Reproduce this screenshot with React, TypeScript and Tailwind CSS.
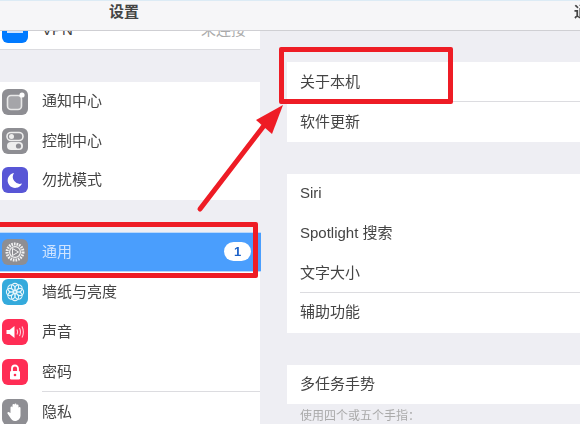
import React from "react";

const font = { fontFamily: '"Liberation Sans", "Noto Sans CJK SC", sans-serif' };

function Tile({ color, children }: { color: string; children: React.ReactNode }) {
  return (
    <div className="ml-[2px] flex h-[26px] w-[26px] shrink-0 items-center justify-center rounded-[6px]" style={{ background: color }}>
      <svg width="22" height="22" viewBox="0 0 22 22">{children}</svg>
    </div>
  );
}

function SideRow({ icon, label, border, h = "h-10" }: { icon: React.ReactNode; label: string; border?: boolean; h?: string }) {
  return (
    <div className={`relative flex items-center ${h}`}>
      {icon}
      <span className="ml-[14px] text-[15px] text-[#444]">{label}</span>
      {border && <div className="absolute bottom-0 left-[42px] right-0 h-px bg-[#dcdce0]" />}
    </div>
  );
}

function RightRow({ label, border, h = "h-10" }: { label: string; border?: boolean; h?: string }) {
  return (
    <div className={`relative flex items-center pl-[13px] text-[15px] text-[#444] ${h}`}>
      {label}
      {border && <div className="absolute bottom-0 left-[13px] right-0 h-px bg-[#dcdce0]" />}
    </div>
  );
}

const notify = (
  <Tile color="#8e8e93">
    <rect x="3.5" y="4.5" width="14" height="14" rx="3.5" fill="#a5a5a9" stroke="#e8e8e8" strokeWidth="1.6" />
    <circle cx="18" cy="4" r="2.6" fill="#fff" />
  </Tile>
);
const control = (
  <Tile color="#8e8e93">
    <rect x="3" y="2.5" width="16" height="8" rx="4" fill="none" stroke="#eee" strokeWidth="1.6" />
    <circle cx="7.5" cy="6.5" r="2.5" fill="#eee" />
    <rect x="3" y="12" width="16" height="8" rx="4" fill="#eee" />
    <circle cx="14.5" cy="16" r="2.6" fill="#8e8e93" />
  </Tile>
);
const moon = (
  <Tile color="#5856d6">
    <path d="M10 4a7.5 7.5 0 1 0 8 10.5A7 7 0 0 1 10 4z" fill="#fff" />
  </Tile>
);
const gear = (
  <Tile color="#8e8e93">
    <circle cx="11" cy="11" r="8" fill="none" stroke="#f2f2f2" strokeWidth="3" strokeDasharray="1.6 1" />
    <circle cx="11" cy="11" r="5.4" fill="none" stroke="#f2f2f2" strokeWidth="1.2" />
    <path d="M8.5 7.5 L14.5 11 L8.5 14.5 Z" fill="none" stroke="#f2f2f2" strokeWidth="1" />
  </Tile>
);
const flower = (
  <Tile color="#34aadc">
    {[0, 45, 90, 135, 180, 225, 270, 315].map((a) => (
      <circle key={a} cx="11" cy="6" r="3.6" fill="none" stroke="#e6f5fb" strokeWidth="1.1" transform={`rotate(${a} 11 11)`} />
    ))}
  </Tile>
);
const sound = (
  <Tile color="#ff2d55">
    <path d="M2.5 9h3l5-4v12l-5-4h-3z" fill="#fff" />
    <path d="M13 8.5q1.4 2.5 0 5M15.5 7q2 4 0 8M18 5.5q2.8 5.5 0 11" fill="none" stroke="#ffd0da" strokeWidth="1.1" />
  </Tile>
);
const lock = (
  <Tile color="#ff2d55">
    <path d="M8 10V7.5a3 3 0 0 1 6 0V10" fill="none" stroke="#fff" strokeWidth="1.8" />
    <rect x="6" y="10" width="10" height="8.5" rx="1.2" fill="#fff" />
    <circle cx="11" cy="14" r="1.3" fill="#ff2d55" />
  </Tile>
);
const hand = (
  <Tile color="#8e8e93">
    <path d="M6.5 12V6.5a1 1 0 0 1 2 0V4a1 1 0 0 1 2 0V3.5a1 1 0 0 1 2 0V4.5a1 1 0 0 1 2 0V7a1 1 0 0 1 2 0v7.5c0 3-2.5 5.5-5.5 5.5-2.5 0-3.5-1.5-4.5-3L3.5 12.5c-.6-1 .8-2 1.6-1.2z" fill="#fff" />
  </Tile>
);

export default function App() {
  return (
    <div className="relative h-[424px] w-[580px] overflow-hidden bg-[#eeeef3]" style={font}>
      <div className="h-full w-full blur-[0.5px]">
        <header className="relative z-10 flex h-[31px] items-center border-t border-b border-t-[#dcebf5] border-b-[#cfcfd3] bg-[#f6f6f8] pb-[6px]">
          <div className="w-[248px] text-center text-[15px] font-bold text-[#444]">设置</div>
          <div className="ml-[326px] w-[6px] overflow-hidden whitespace-nowrap text-[15px] font-bold text-[#444]">通用</div>
        </header>

        <div className="flex">
          <aside className="flex h-[393px] w-[261px] shrink-0 flex-col overflow-hidden">
            <div className="mr-px h-[19px] shrink-0 overflow-hidden border-b border-[#dcdce0] bg-white">
              <div className="-mt-[21px] flex h-10 items-center">
                <Tile color="#007aff"><rect x="3" y="6" width="16" height="8" fill="#cfe4ff" /></Tile>
                <span className="ml-[14px] text-[15px] text-[#444]">VPN</span>
                <span className="ml-auto mr-[14px] text-[15px] text-[#aaa]">未连接</span>
              </div>
            </div>
            <div className="mr-px mt-[32px] shrink-0 bg-white">
              <SideRow icon={notify} label="通知中心" h="h-[39.4px]" />
              <SideRow icon={control} label="控制中心" h="h-[39.4px]" />
              <SideRow icon={moon} label="勿扰模式" h="h-[39.2px]" />
            </div>
            <div className="mt-[32px] shrink-0 grow">
              <div className="flex h-10 items-center border-y border-[#b9d8fb] bg-[#4a9efd]">
                {gear}
                <span className="ml-[14px] text-[15px] text-[#cfe4ff]">通用</span>
                <span className="ml-auto mr-[10px] flex h-[19px] w-[27px] items-center justify-center rounded-full bg-white text-[13px] font-bold text-[#1d62c9]">1</span>
              </div>
              <div className="mr-px bg-white">
                <SideRow icon={flower} label="墙纸与亮度" />
                <SideRow icon={sound} label="声音" />
                <SideRow icon={lock} label="密码" border />
                <SideRow icon={hand} label="隐私" />
              </div>
            </div>
          </aside>

          <main className="ml-[26px] grow">
            <section className="mt-[31px] bg-white">
              <RightRow label="关于本机" border />
              <RightRow label="软件更新" />
            </section>
            <section className="mt-[32px] bg-white">
              <RightRow label="Siri" h="h-[39.75px] pb-[1px]" />
              <RightRow label="Spotlight 搜索" h="h-[39.75px] pb-[1px]" />
              <RightRow label="文字大小" border h="h-[39.75px] pb-[1px]" />
              <RightRow label="辅助功能" h="h-[39.75px] pb-[1px]" />
            </section>
            <section className="mt-[32px] bg-white">
              <RightRow label="多任务手势" h="h-[39px]" />
            </section>
            <p className="mt-[3px] pl-[13px] text-[12px] text-[#aaa]">使用四个或五个手指：</p>
          </main>
        </div>
      </div>

      <div className="absolute left-[279px] top-[47px] h-[57px] w-[174px] rounded-[2px] border-[5px] border-[#ee1c25]" />
      <div className="absolute -left-[8px] top-[222px] h-[56px] w-[266px] rounded-[2px] border-[5px] border-[#ee1c25]" />
      <svg className="absolute left-[190px] top-[100px]" width="100" height="115" viewBox="0 0 100 115">
        <path d="M10 109 L76 23" stroke="#ee1c25" strokeWidth="5" strokeLinecap="round" />
        <path d="M93 5 L66 20 L82 34 Z" fill="#ee1c25" />
      </svg>
    </div>
  );
}
